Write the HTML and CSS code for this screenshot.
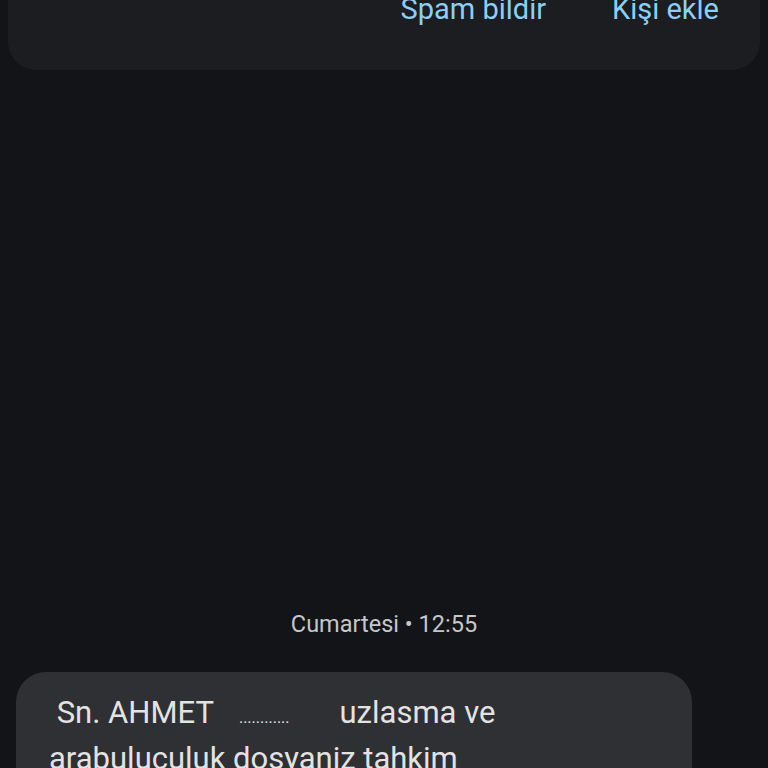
FILE: index.html
```html
<!DOCTYPE html>
<html lang="tr">
<head>
    <meta charset="UTF-8">
    <meta name="viewport" content="width=device-width, initial-scale=1.0">
    <title>Mesajlar</title>
    <link rel="stylesheet" href="styles.css">
</head>
<body>
    <div class="sender-card">
        <div class="card-actions">
            <span class="action-link">Spam bildir</span>
            <span class="action-link">Kişi ekle</span>
        </div>
    </div>

    <div class="day-stamp">Cumartesi • 12:55</div>

    <div class="message-bubble">
        <p class="message-text">&nbsp;Sn. AHMET<span class="dots">............</span>uzlasma ve arabuluculuk dosyaniz tahkim asamasindadir.</p>
    </div>
</body>
</html>
```

FILE: styles.css
```css
body {
    margin: 0;
    background-color: #121418;
    font-family: Roboto, 'Noto Sans', sans-serif;
    overflow: hidden;
}
.sender-card {
    margin: -30px 8px 0;
    height: 77px;
    padding: 23px 41px 0;
    background-color: #1b1d20;
    border-radius: 0 0 28px 28px;
}
.card-actions {
    display: flex;
    justify-content: flex-end;
    gap: 66px;
}
.action-link {
    color: #8ccff5;
    font-size: 29px;
    line-height: 33px;
}
.day-stamp {
    margin-top: 540px;
    text-align: center;
    color: #c5c7c9;
    font-size: 23.5px;
    line-height: 28px;
}
.message-bubble {
    width: 610px;
    margin: 34px 0 0 16px;
    padding: 18px 33px 20px;
    background-color: #2e3033;
    border-radius: 30px;
}
.message-text {
    margin: 0;
    color: #e3e3e3;
    font-size: 31px;
    line-height: 46px;
}
.dots {
    display: inline-block;
    font-size: 16px;
    line-height: 1;
    margin: 0 50px 0 25px;
}
```
